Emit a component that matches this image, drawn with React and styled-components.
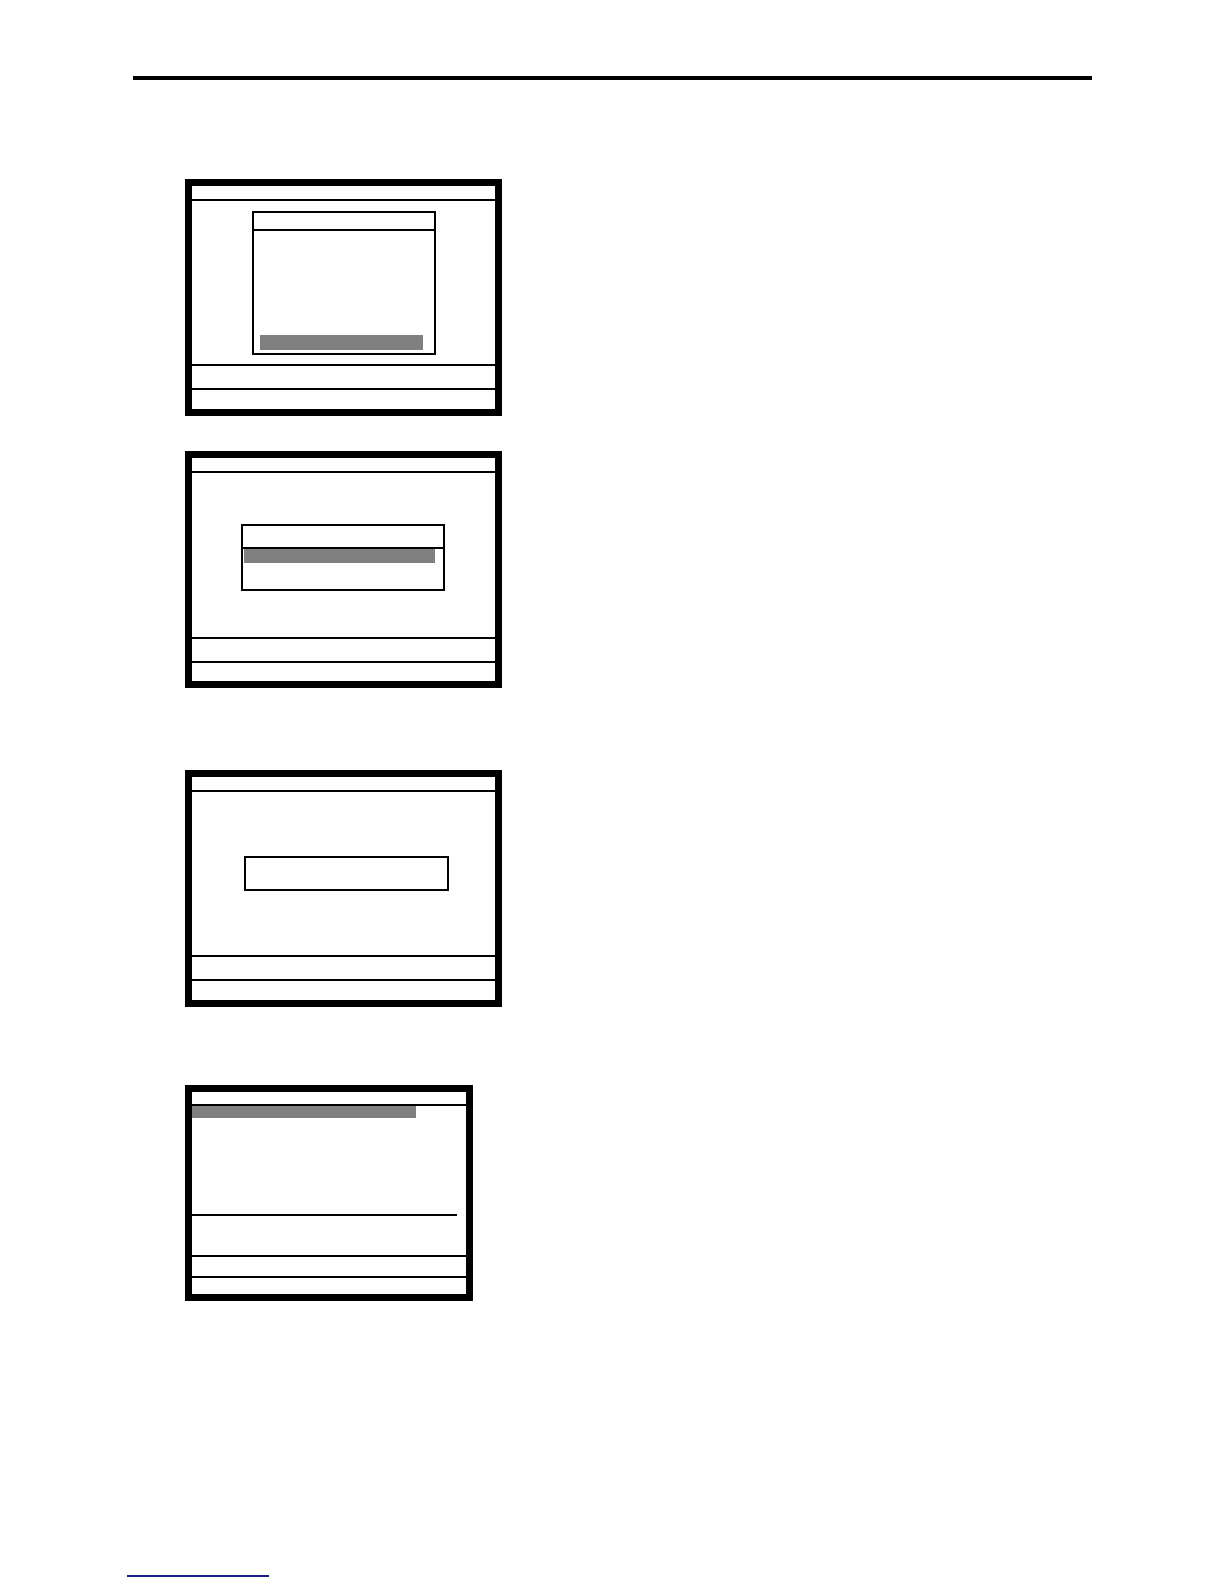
import React from 'react'
import styled, { createGlobalStyle } from 'styled-components'

const GlobalStyle = createGlobalStyle`
  * { box-sizing: border-box; }
  body {
    margin: 0;
    background: #ffffff;
    font-family: "Liberation Sans", Arial, sans-serif;
  }
`

const Page = styled.div`
  width: 1224px;
  min-height: 1584px;
  padding-top: 76px;
  display: flex;
  flex-direction: column;
`

const Rule = styled.div`
  margin-left: 133px;
  width: 959px;
  height: 4px;
  background: #000;
`

const Frame = styled.div`
  margin-left: 185px;
  margin-top: ${p => p.$top}px;
  width: ${p => p.$w}px;
  height: ${p => p.$h}px;
  border: 7px solid #000;
  display: flex;
  flex-direction: column;
  background: #fff;
`

const TitleBar = styled.div`
  height: ${p => p.$h}px;
  flex: none;
  border-bottom: 2px solid #000;
  box-sizing: content-box;
`

const Body = styled.div`
  flex: 1;
  display: flex;
  flex-direction: column;
  align-items: ${p => (p.$list ? 'stretch' : 'center')};
  justify-content: ${p => (p.$list ? 'flex-start' : 'center')};
`

const StatusBar = styled.div`
  height: ${p => p.$h}px;
  flex: none;
  border-top: 2px solid #000;
`

const Dialog = styled.div`
  width: ${p => p.$w}px;
  height: ${p => p.$h}px;
  margin-left: ${p => p.$nudge || 0}px;
  margin-top: ${p => p.$down || 0}px;
  border: 2px solid #000;
  display: flex;
  flex-direction: column;
  background: #fff;
`

const DialogHead = styled.div`
  height: ${p => p.$h}px;
  flex: none;
  border-bottom: 2px solid #000;
  box-sizing: content-box;
`

const DialogList = styled.div`
  flex: 1;
  display: flex;
  flex-direction: column;
  justify-content: ${p => (p.$bottom ? 'flex-end' : 'flex-start')};
  padding: ${p => p.$pad};
`

const Highlight = styled.div`
  width: ${p => p.$w}px;
  height: ${p => p.$h}px;
  background: #808080;
  flex: none;
`

const Divider = styled.div`
  margin-top: auto;
  margin-bottom: 39px;
  width: ${p => p.$w}px;
  height: 2px;
  background: #000;
`

const FootLink = styled.div`
  margin-top: 274px;
  margin-left: 127px;
  width: 142px;
  height: 2px;
  background: #1c1c8a;
`

export default function App() {
  return (
    <>
      <GlobalStyle />
      <Page>
        <Rule />

        <Frame $top={99} $w={317} $h={237}>
          <TitleBar $h={13} />
          <Body>
            <Dialog $w={184} $h={144}>
              <DialogHead $h={16} />
              <DialogList $bottom $pad="0 0 3px 6px">
                <Highlight $w={163} $h={15} />
              </DialogList>
            </Dialog>
          </Body>
          <StatusBar $h={24} />
          <StatusBar $h={21} />
        </Frame>

        <Frame $top={35} $w={317} $h={237}>
          <TitleBar $h={13} />
          <Body>
            <Dialog $w={204} $h={67} $nudge={-2} $down={4}>
              <DialogHead $h={21} />
              <DialogList $pad="0 0 0 1px">
                <Highlight $w={191} $h={14} />
              </DialogList>
            </Dialog>
          </Body>
          <StatusBar $h={24} />
          <StatusBar $h={20} />
        </Frame>

        <Frame $top={82} $w={317} $h={237}>
          <TitleBar $h={13} />
          <Body>
            <Dialog $w={205} $h={35} $nudge={6} />
          </Body>
          <StatusBar $h={24} />
          <StatusBar $h={21} />
        </Frame>

        <Frame $top={78} $w={288} $h={216}>
          <TitleBar $h={12} />
          <Body $list>
            <Highlight $w={224} $h={12} />
            <Divider $w={265} />
          </Body>
          <StatusBar $h={21} />
          <StatusBar $h={18} />
        </Frame>

        <FootLink />
      </Page>
    </>
  )
}
